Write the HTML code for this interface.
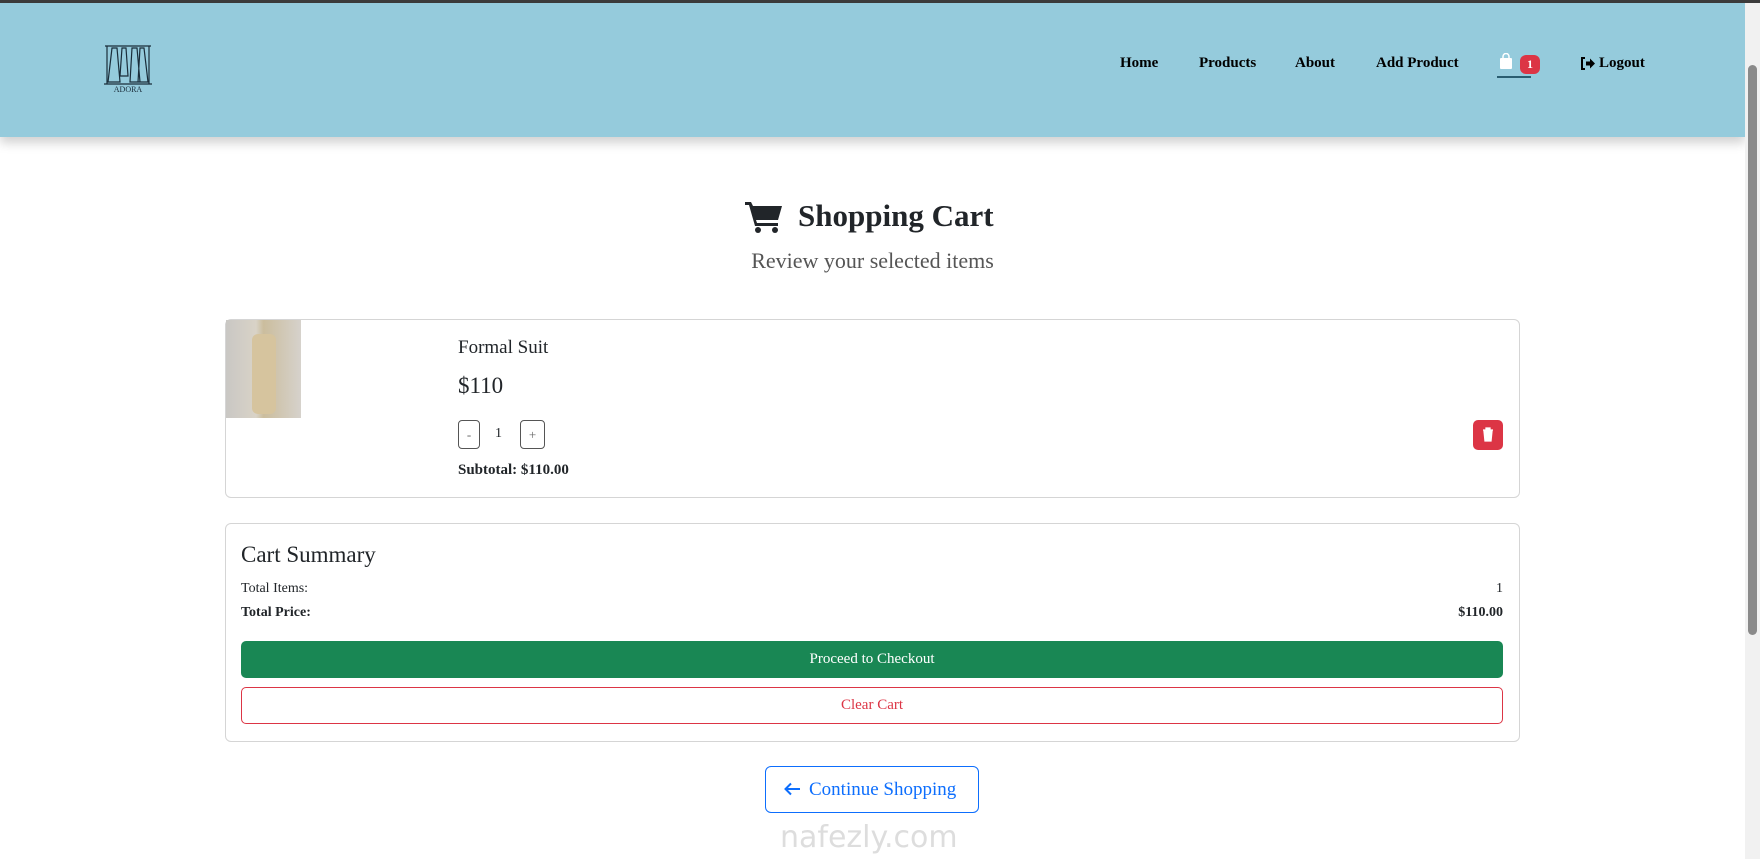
<!DOCTYPE html>
<html><head><meta charset="utf-8"><style>
*{box-sizing:border-box;margin:0;padding:0}
body{width:1760px;height:859px;overflow:hidden;background:#fff;font-family:"Liberation Serif",serif;color:#212529;position:relative}
.top{position:absolute;left:0;top:0;width:1760px;height:3px;background:#3c3c3c}
header{position:absolute;left:0;top:3px;width:1745px;height:134px;background:#95cbdc;box-shadow:0 6px 10px rgba(0,0,0,.18)}
.nav{position:absolute;top:52px;font-weight:bold;font-size:15px;color:#000}
.scroll{position:absolute;right:0;top:3px;width:15px;height:856px;background:#f1f1f1}
.thumb{position:absolute;right:3px;top:62px;width:9px;height:570px;background:#8a8a8a;border-radius:5px}
.card{position:absolute;left:225px;width:1295px;border:1px solid #d5d5d5;border-radius:6px;background:#fff}
.abs{position:absolute}
.qb{position:absolute;top:420px;height:29px;border:1px solid #555;border-radius:4px;font-size:13px;color:#666;text-align:center;line-height:27px}
</style></head><body>
<div class="top"></div>
<header>
<svg class="abs" style="left:102px;top:39px" width="52" height="52" viewBox="0 0 52 52" fill="none" stroke="#1a2d3a" stroke-width="1.2">
<path d="M3 4h46M5 4v38M47 4v38M2 42h48"/>
<path d="M10 6l-4 34h12l-3-34zM20 6l-2 28h8l-2-28zM30 6l-2 34h10l-3-34zM38 6l-2 34h10l-4-34z"/>
<text x="26" y="50" font-size="8" text-anchor="middle" fill="#1a2d3a" stroke="none" font-family="Liberation Serif">ADORA</text>
</svg>
<div class="nav" style="left:1120px">Home</div>
<div class="nav" style="left:1199px">Products</div>
<div class="nav" style="left:1295px">About</div>
<div class="nav" style="left:1376px">Add Product</div>
<svg class="abs" style="left:1499px;top:50px" width="14" height="17" viewBox="0 0 14 17"><path d="M4 5V3.5a3 3 0 0 1 6 0V5" stroke="#fff" stroke-width="1.5" fill="none"/><rect x="1" y="5" width="12" height="11" rx="1" fill="#fff"/></svg>
<div class="abs" style="left:1520px;top:52px;width:20px;height:19px;background:#dc3545;border-radius:6px;color:#fff;font-size:12px;font-weight:bold;text-align:center;line-height:19px">1</div>
<div class="abs" style="left:1497px;top:73px;width:34px;height:2px;background:#2a5d70"></div>
<svg class="abs" style="left:1580px;top:54px" width="15" height="13" viewBox="0 0 15 13"><path d="M5 1H2v11h3" stroke="#000" stroke-width="2" fill="none"/><path d="M6 4.5h4V1.5l5 5-5 5v-3H6z" fill="#000"/></svg>
<div class="nav" style="left:1599px">Logout</div>
</header>
<div class="scroll"><div class="thumb"></div></div>

<svg class="abs" style="left:745px;top:200px" width="38" height="34" viewBox="0 0 38 34"><path d="M0 2h6l2 4h29l-4 14H11l1 3h21v3H10L4 5H0z" fill="#212529"/><circle cx="13" cy="30" r="3" fill="#212529"/><circle cx="30" cy="30" r="3" fill="#212529"/></svg>
<div class="abs" style="left:798px;top:198px;font-size:31px;font-weight:bold">Shopping Cart</div>
<div class="abs" style="left:0;width:1745px;top:248px;text-align:center;font-size:22px;color:#555">Review your selected items</div>

<div class="card" style="top:319px;height:179px"></div>
<div class="abs" style="left:226px;top:320px;width:75px;height:98px;background:linear-gradient(90deg,#c9c7c4,#d9d3c7 40%,#cbbd9d 50%,#d6d2cc)"><div style="margin:14px 0 0 26px;width:24px;height:80px;background:#d6c49e;border-radius:6px"></div></div>
<div class="abs" style="left:458px;top:337px;font-size:19px">Formal Suit</div>
<div class="abs" style="left:458px;top:373px;font-size:23px">$110</div>
<div class="qb" style="left:458px;width:22px">-</div>
<div class="abs" style="left:495px;top:426px;font-size:14px">1</div>
<div class="qb" style="left:520px;width:25px">+</div>
<div class="abs" style="left:458px;top:462px;font-size:15px;font-weight:bold">Subtotal: $110.00</div>
<div class="abs" style="left:1473px;top:420px;width:30px;height:30px;background:#dc3545;border-radius:5px"><svg width="30" height="30" viewBox="0 0 30 30"><path d="M10 10h10M13 10V8h4v2M11 11l1 10h6l1-10z" fill="#fff" stroke="#fff" stroke-width="1.3"/></svg></div>

<div class="card" style="top:523px;height:219px"></div>
<div class="abs" style="left:241px;top:542px;font-size:23px">Cart Summary</div>
<div class="abs" style="left:241px;top:581px;font-size:14px">Total Items:</div>
<div class="abs" style="right:257px;top:581px;font-size:14px">1</div>
<div class="abs" style="left:241px;top:605px;font-size:14px;font-weight:bold">Total Price:</div>
<div class="abs" style="right:257px;top:605px;font-size:14px;font-weight:bold">$110.00</div>
<div class="abs" style="left:241px;top:641px;width:1262px;height:37px;background:#198754;border-radius:5px;color:#fff;text-align:center;line-height:37px;font-size:15px">Proceed to Checkout</div>
<div class="abs" style="left:241px;top:687px;width:1262px;height:37px;border:1px solid #dc3545;border-radius:5px;color:#dc3545;text-align:center;line-height:35px;font-size:15px">Clear Cart</div>

<div class="abs" style="left:765px;top:766px;width:214px;height:47px;border:1px solid #0d6efd;border-radius:6px;color:#0d6efd;font-size:19px;line-height:45px;padding-left:43px">Continue Shopping</div>
<svg class="abs" style="left:784px;top:782px" width="17" height="14" viewBox="0 0 17 14"><path d="M16 7H2M7 1.5L1.5 7 7 12.5" stroke="#0d6efd" stroke-width="2" fill="none"/></svg>
<div class="abs" style="left:780px;top:820px;font-family:'DejaVu Sans',sans-serif;font-size:30px;color:rgba(180,180,180,.45)">nafezly.com</div>
</body></html>
